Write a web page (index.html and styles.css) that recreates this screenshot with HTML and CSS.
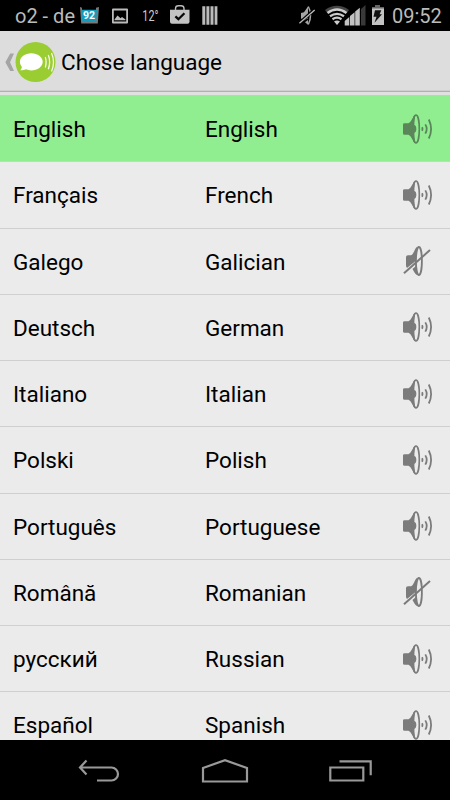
FILE: index.html
```html
<!DOCTYPE html>
<html lang="en">
<head>
<meta charset="utf-8">
<title>Chose language</title>
<link rel="stylesheet" href="styles.css">
</head>
<body>
<svg class="defs" aria-hidden="true">
  <symbol id="on" viewBox="0 0 32 32">
    <path d="M1 11.5Q1 10.2 2.5 10.2H6.5C9.5 9 10.5 3.5 13.4 1.7V30.3C10.5 28.5 9.5 23 6.5 21.8H2.5Q1 21.8 1 20.5Z" fill="currentColor"/>
    <ellipse class="hollow" cx="14" cy="16" rx="3.3" ry="14" stroke="currentColor" stroke-width="1.6"/>
    <path d="M11 4.5C12.5 2.5 12.8 2 13.3 2.5C12.6 6 12.4 9 12.4 12.1C15 12.6 15 19.4 12.4 19.9C12.4 23 12.6 26 13.3 29.5C12.8 30 12.5 29.5 11 27.5Z" fill="currentColor"/>
    <path d="M20 14.3q1 1.7 0 3.4M23.3 11.4q2.8 4.6 0 9.2M26.8 6.5q4.6 9.5 0 19" fill="none" stroke="currentColor" stroke-width="1.8"/>
  </symbol>
  <symbol id="off" viewBox="0 0 32 32">
    <path d="M4 12Q4 10.3 6 10.3H9C12 9 12.5 3.5 15.3 1.5L14.5 7L14.2 15.5L5 23Q4 21.5 4 20.5Z" fill="currentColor"/>
    <path d="M10.5 24L15 20V30C13 29 11.8 26 10.5 24Z" fill="currentColor"/>
    <ellipse cx="16.9" cy="16" rx="3" ry="14" fill="none" stroke="currentColor" stroke-width="1.8"/>
    <path d="M2 28.3L28 5" stroke="currentColor" stroke-width="2" fill="none"/>
  </symbol>
</svg>
<div class="phone">
  <header class="status">
    <span class="carrier">o2 - de</span>
    <svg class="notifications" viewBox="0 0 150 31">
      <path d="M2 7l2 .8v2h14v-2l3-.8-1.2 16.5H3.2z" fill="#7d7774"/>
      <path d="M3.5 10h15.5l-.8 12H4.3z" fill="#149bbd"/>
      <text x="5" y="19.3" class="count">92</text>
      <path fill-rule="evenodd" d="M35 8.5h14q1 0 1 1v13q0 1-1 1H35q-1 0-1-1v-13q0-1 1-1zm.8 2v11h12.4v-11zM36.5 19.5l3-4 3 2.8 1.5-1.3 3.5 2.5v.8h-11z" fill="#bbb"/>
      <text x="64.5" y="21.5" class="degrees">12°</text>
      <path d="M97.5 10V8.5q0-2.7 3-2.7h2.5q3 0 3 2.7V10" fill="none" stroke="#bbb" stroke-width="1.4"/>
      <path d="M92 9.7h19.5v12q0 2-2 2H94q-2 0-2-2z" fill="#c3c3c3"/>
      <path d="M97.4 16.4l3 2.8 6-6" fill="none" stroke="#080808" stroke-width="2.3"/>
      <path d="M124.3 6.3h3v18.5h-3zm4.1 0h3v18.5h-3zm4.1 0h3v18.5h-3zm4.1 0h2.8v18.5h-2.8z" fill="#bbb"/>
    </svg>
    <svg class="system" viewBox="0 0 90 31">
      <path d="M2 13l3-.8 4-5.7v11.8l-4 2.3-3-2.2zM6 22.3l3-2.3v4.7z" fill="#a6a6a6"/>
      <path d="M9.3 6.5q4.5 8.5 0 18" fill="none" stroke="#a6a6a6" stroke-width="1.5"/>
      <path d="M.4 22.8L15.7 9.5" stroke="#000" stroke-width="3"/>
      <path d="M.4 23.3L15.7 10" stroke="#bbb" stroke-width="1.4"/>
      <path d="M26 10Q38 1.7 50 10l-2 2.7Q38 5.5 28 12.7z" fill="#454545"/>
      <path d="M28.5 13q9.5-7 19 0M31 16.3q7-5 14 0M33.5 19.2q4.5-3 9 0" fill="none" stroke="#ccc" stroke-width="2.3"/>
      <path d="M35 21.5q3-1.8 6 0L38 25z" fill="#ccc"/>
      <path d="M45.7 25.5v-4.6l4.6-3.8v8.4zM51 25.5v-9.5l4.6-3.8v13.3zM56.2 25.5V11.4l4.6-3.6v17.7z" fill="#c3c3c3"/>
      <path d="M62 25.5V9L66.5 5v20.5z" fill="#383838"/>
      <path d="M76 5h5v2h4v2H73V7h3z" fill="#666"/>
      <path d="M73 8.5h12V25H73z" fill="#c3c3c3"/>
      <path d="M76 10.2h6.3l-1.7 4h2.4L75.5 22.8l2-6h-3z" fill="#111"/>
    </svg>
    <span class="clock">09:52</span>
  </header>
  <div class="actionbar">
    <svg class="up" viewBox="0 0 56 44">
      <path d="M10.2 13.5H14L10 22.3l4 8.7h-3.8L5.4 22.3z" fill="#a5a5a5"/>
      <circle cx="35.5" cy="22" r="20" fill="#9acd32"/>
      <path d="M31.3 13.2c6.3 0 11.4 3.7 11.4 8.5s-5.1 8.7-11.4 8.7c-2 0-3.8-.4-5.4-1.1-1.8 1-3.8 1.2-5.8.9 1.2-1 1.8-2.2 1.7-3.5-1.3-1.5-1.9-3.2-1.9-5 0-4.8 5.1-8.5 11.4-8.5z" fill="#fff"/>
      <path d="M45.3 17q1.6 5 0 10.5M48.3 15q2.7 7 0 14.3M51.5 13q4 9 0 18.5" fill="none" stroke="#f6faeb" stroke-width="1.3"/>
    </svg>
    <h1>Chose language</h1>
  </div>
  <main class="list">
    <div class="row selected"><span>English</span><span>English</span><svg><use href="#on"/></svg></div>
    <div class="row"><span>Français</span><span>French</span><svg><use href="#on"/></svg></div>
    <div class="row"><span>Galego</span><span>Galician</span><svg><use href="#off"/></svg></div>
    <div class="row"><span>Deutsch</span><span>German</span><svg><use href="#on"/></svg></div>
    <div class="row"><span>Italiano</span><span>Italian</span><svg><use href="#on"/></svg></div>
    <div class="row"><span>Polski</span><span>Polish</span><svg><use href="#on"/></svg></div>
    <div class="row"><span>Português</span><span>Portuguese</span><svg><use href="#on"/></svg></div>
    <div class="row"><span>Română</span><span>Romanian</span><svg><use href="#off"/></svg></div>
    <div class="row"><span>русский</span><span>Russian</span><svg><use href="#on"/></svg></div>
    <div class="row"><span>Español</span><span>Spanish</span><svg><use href="#on"/></svg></div>
  </main>
  <nav class="navbar">
    <svg viewBox="0 0 44 24"><path d="M9.5 1.5L3 8.5l6.5 7M3 8.5h31.5a6.2 6.2 0 0 1 0 13H20"/></svg>
    <svg class="home" viewBox="0 0 48 26"><path d="M2 10L24 2.2 46 10v13.5H2z"/></svg>
    <svg viewBox="0 0 44 24"><path d="M1.3 8.5h33v13h-33zM10.5 2.3h31.2v14"/></svg>
  </nav>
</div>
</body>
</html>
```
FILE: styles.css
```css
* { box-sizing: border-box; }
body { margin: 0; background: #000; font-family: Roboto, "Noto Sans", sans-serif; }
.defs { display: none; }
.phone { width: 450px; height: 800px; display: flex; flex-direction: column; overflow: hidden; }
.status { height: 31px; flex: none; display: flex; align-items: center; background: #000; color: #bbb; font-size: 20px; white-space: nowrap; }
.carrier { width: 63px; margin-left: 15px; line-height: 31px; padding-top: 2px; }
.notifications { width: 150px; height: 31px; }
.system { width: 90px; height: 31px; margin-left: 71px; }
.clock { margin-left: 3px; line-height: 31px; padding-top: 2px; }
.count { font-size: 10.5px; font-weight: 700; fill: #fff; }
.degrees { font-size: 15px; fill: #ccc; transform: scaleX(.72); transform-origin: 64px 0; }
.actionbar { height: 65px; flex: none; display: flex; align-items: center; background: #ddd; border-bottom: 1px solid #c9c9c9; box-shadow: inset 0 -3px #e0e0e0, inset 0 -4px #b0b0b0, inset 0 -5px #cfcfcf; }
.up { width: 56px; height: 44px; margin-top: -3px; }
h1 { margin: -2px 0 0 5px; font-size: 22.5px; font-weight: 400; line-height: 31px; color: #000; }
.list { height: 644px; flex: none; overflow: hidden; background: #ebebeb; }
.row { height: 66.25px; display: grid; grid-template-columns: 192px 197px 32px; align-items: center; padding-left: 13px; border-bottom: 1px solid #cfcfcf; font-size: 22.5px; color: #000; --fill: #ebebeb; }
.row span { padding-top: 1px; }
.selected { background: #90ee90; --fill: #90ee90; }
.row svg { width: 32px; height: 32px; color: #7b7b7b; }
.selected svg { color: #5a865a; }
.hollow { fill: var(--fill); }
.navbar { height: 60px; flex: none; display: flex; padding: 2px 77px 0; align-items: center; justify-content: space-between; background: #000; }
.navbar svg { width: 44px; height: 24px; fill: none; stroke: #999; stroke-width: 2.2; }
.navbar .home { width: 48px; height: 26px; }
```
